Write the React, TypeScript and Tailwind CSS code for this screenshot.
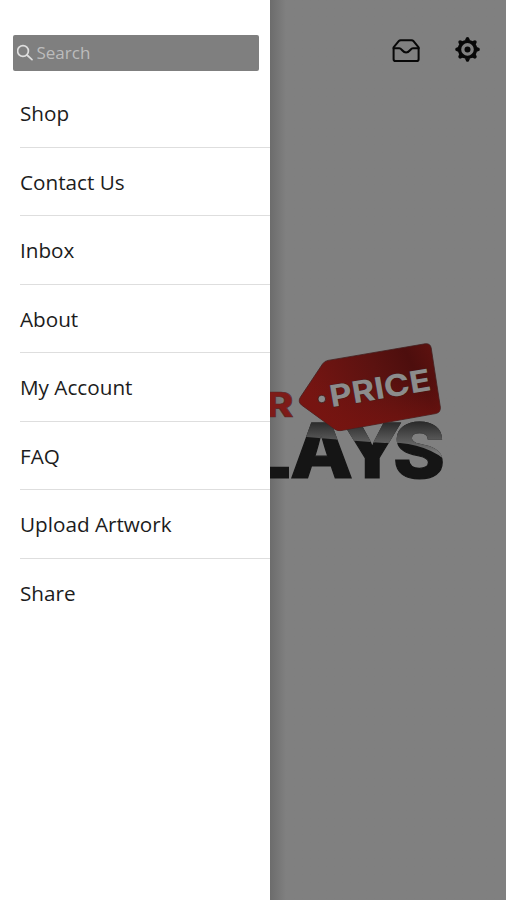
const items = ['Shop', 'Contact Us', 'Inbox', 'About', 'My Account', 'FAQ', 'Upload Artwork', 'Share'];

function SearchIcon() {
  return (
    <svg className="shrink-0" width="17" height="18" viewBox="0 0 17 18" fill="none" stroke="#dedede" strokeWidth="1.7" strokeLinecap="round">
      <circle cx="6" cy="7" r="5.4" />
      <path d="M10 11 L15 15.6" />
    </svg>
  );
}

function InboxIcon() {
  return (
    <svg width="30" height="26" viewBox="0 0 30 26" fill="none" stroke="#080808" strokeWidth="2" strokeLinejoin="round" strokeLinecap="round">
      <path d="M2.6 10.4 L7.7 4.2 Q8.5 3.2 9.8 3.2 H20.4 Q21.7 3.2 22.5 4.2 L27.6 10.4 V22.2 Q27.6 24 25.8 24 H4.4 Q2.6 24 2.6 22.2 Z" />
      <path d="M2.6 11.2 H8.2 C11 11.2 11 15.4 15.1 15.4 C19.2 15.4 19.2 11.2 22 11.2 H27.6" />
    </svg>
  );
}

function GearIcon() {
  return (
    <svg width="26" height="26" viewBox="0 0 26 26" fill="none" stroke="#080808">
      <circle cx="13.5" cy="12.4" r="8" strokeWidth="3.4" />
      <circle cx="13.5" cy="12.4" r="3" fill="#080808" stroke="none" />
      <g fill="#080808" stroke="none">
        {[0, 45, 90, 135, 180, 225, 270, 315].map((a) => (
          <path key={a} d="M10.8 3.6 L12.2 0.6 Q13.5 -0.4 14.8 0.6 L16.2 3.6 Z" transform={`rotate(${a} 13.5 12.4)`} />
        ))}
      </g>
    </svg>
  );
}

function Logo() {
  return (
    <svg className="block" width="190" height="155" viewBox="270 335 190 155" fontFamily="Inter, sans-serif">
      <defs>
        <linearGradient id="tag" x1="0" y1="0.3" x2="1" y2="0">
          <stop offset="0" stopColor="#761512" />
          <stop offset="0.5" stopColor="#5b1210" />
          <stop offset="0.75" stopColor="#4d0e0d" />
          <stop offset="1" stopColor="#621310" />
        </linearGradient>
        <linearGradient id="tagShade" x1="0" y1="0" x2="0" y2="1">
          <stop offset="0.4" stopColor="#761410" stopOpacity="0" />
          <stop offset="1" stopColor="#761410" stopOpacity="0.8" />
        </linearGradient>
        <linearGradient id="shine" gradientUnits="userSpaceOnUse" x1="0" y1="421" x2="0" y2="452">
          <stop offset="0" stopColor="#282828" />
          <stop offset="1" stopColor="#777777" />
        </linearGradient>
        <clipPath id="upper">
          <path d="M270 415 H450 V464 Q425 441 385 443 Q340 440 270 434 Z" />
        </clipPath>
        <g id="letters" fontSize="75" fontWeight="800" strokeWidth="1.2">
          <text x="245" y="477.5" textLength="46" lengthAdjust="spacingAndGlyphs">L</text>
          <text x="290" y="477.5" textLength="63" lengthAdjust="spacingAndGlyphs">A</text>
          <text x="342" y="477.5" textLength="60" lengthAdjust="spacingAndGlyphs">Y</text>
          <text x="393" y="477.5" textLength="52" lengthAdjust="spacingAndGlyphs">S</text>
        </g>
      </defs>
      <text x="266" y="416.5" fontSize="34" fontWeight="800" fill="#7e1b18" stroke="#542a29" strokeWidth="0.6" textLength="27.5" lengthAdjust="spacingAndGlyphs">R</text>
      <use href="#letters" fill="#151515" stroke="#151515" />
      <g clipPath="url(#upper)">
        <use href="#letters" fill="url(#shine)" stroke="url(#shine)" />
      </g>
      <g>
        <path d="M300.5 397 L322.5 364 Q324.5 361 328 360.4 L425 343.8 Q430.3 343 431.2 348 L440.3 407 Q441 412.5 435.5 413.6 L341 430.6 Q337.5 431.2 334.5 429 L301.5 405 Q297.5 401.5 300.5 397 Z" fill="url(#tag)" stroke="#42201f" strokeWidth="0.8" />
        <path d="M300.5 397 L322.5 364 Q324.5 361 328 360.4 L425 343.8 Q430.3 343 431.2 348 L440.3 407 Q441 412.5 435.5 413.6 L341 430.6 Q337.5 431.2 334.5 429 L301.5 405 Q297.5 401.5 300.5 397 Z" fill="url(#tagShade)" />
        <circle cx="321.8" cy="399" r="3.8" fill="#8c8c8c" stroke="#35100e" strokeWidth="0.7" />
        <text x="331.5" y="407.3" fontSize="30" fontWeight="700" fill="#8c8c8c" stroke="#451c1b" strokeWidth="1" paintOrder="stroke" textLength="102" lengthAdjust="spacingAndGlyphs" transform="rotate(-9.8 331.5 407.3)">PRICE</text>
      </g>
    </svg>
  );
}

export default function App() {
  return (
    <div className="flex h-[900px] w-[506px] overflow-hidden bg-[#808080] font-['Open_Sans',sans-serif]">
      <aside className="w-[269.5px] shrink-0 bg-white pt-[35px]">
        <label className="ml-[12.5px] flex h-9 w-[246px] items-center gap-[3px] rounded-[2px] bg-[#7f7f7f] pl-[4px]">
          <SearchIcon />
          <input placeholder="Search" className="w-[200px] bg-transparent text-[17px] text-white outline-none placeholder:text-[#bcbcbc]" />
        </label>
        <nav className="mt-[8.5px] pl-5">
          {items.map((item, i) => (
            <a key={item} className={`flex h-[68.45px] items-center pt-[1.5px] text-[20.7px] text-[#1c1c1c] ${i < items.length - 1 ? 'border-b-[1.5px] border-[#dedede]' : ''}`}>
              {item}
            </a>
          ))}
        </nav>
      </aside>
      <main className="flex min-w-0 flex-1 flex-col bg-linear-to-r from-[#6c6c6c] to-[#808080] to-[16px]">
        <header className="flex h-[100px] items-start justify-end gap-[33px] pt-[37px] pr-[26px]">
          <InboxIcon />
          <GearIcon />
        </header>
        <div className="mt-[235px]">
          <Logo />
        </div>
      </main>
    </div>
  );
}
